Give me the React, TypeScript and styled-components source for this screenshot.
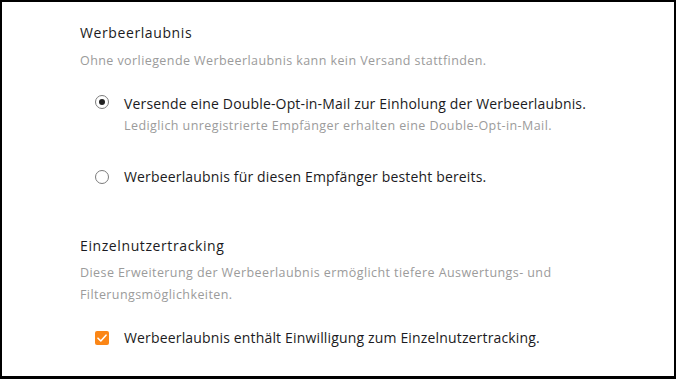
import React, { useState } from "react";
import styled, { createGlobalStyle } from "styled-components";

const Global = createGlobalStyle`
  html, body { margin: 0; padding: 0; background: #fff; }
  body { font-family: "Open Sans", "Noto Sans", sans-serif; }
  * { box-sizing: border-box; }
`;

const Frame = styled.div`
  width: 676px;
  height: 379px;
  border: 2px solid #000;
  border-bottom-width: 3px;
  padding: 21px 40px 0 78px;
  background: #fff;
`;

const Section = styled.section<{ $gap?: number }>`
  margin-top: ${(p) => p.$gap ?? 0}px;
`;

const Title = styled.h2`
  margin: 0;
  font-size: 14px;
  line-height: 20px;
  font-weight: 400;
  letter-spacing: 0.6px;
  color: #1b1b22;
`;

const Desc = styled.p<{ $mt?: number }>`
  margin: ${(p) => p.$mt ?? 8}px 0 0;
  max-width: 520px;
  font-size: 12.5px;
  line-height: 22px;
  letter-spacing: 0.42px;
  color: #9b9b9b;
`;

const Options = styled.div<{ $mt: number }>`
  margin-top: ${(p) => p.$mt}px;
  padding-left: 15px;
  display: flex;
  flex-direction: column;
`;

const Option = styled.label<{ $mt?: number }>`
  display: grid;
  grid-template-columns: 14px 1fr;
  column-gap: 15px;
  align-items: start;
  margin-top: ${(p) => p.$mt ?? 0}px;
  cursor: pointer;
`;

const Control = styled.span`
  height: 20px;
  display: flex;
  align-items: center;
`;

const Radio = styled.span<{ $on: boolean }>`
  width: 14px;
  height: 14px;
  border-radius: 50%;
  border: 1px solid #7b7b7b;
  display: flex;
  align-items: center;
  justify-content: center;
  &::after {
    content: "";
    width: 6px;
    height: 6px;
    border-radius: 50%;
    background: ${(p) => (p.$on ? "#222" : "transparent")};
  }
`;

const Check = styled.span<{ $on: boolean }>`
  width: 14px;
  height: 14px;
  border-radius: 2px;
  background: ${(p) => (p.$on ? "#fb8616" : "#fff")};
  border: ${(p) => (p.$on ? "none" : "1px solid #7b7b7b")};
  display: flex;
  align-items: center;
  justify-content: center;
`;

const LabelText = styled.span`
  font-size: 14px;
  line-height: 20px;
  letter-spacing: 0.16px;
  color: #1b1b22;
`;

const SubText = styled.span`
  display: block;
  margin-top: 2px;
  font-size: 12.5px;
  line-height: 20px;
  letter-spacing: 0.42px;
  color: #9b9b9b;
`;

export default function App() {
  const [mode, setMode] = useState<"doi" | "exists">("doi");
  const [track, setTrack] = useState(true);

  return (
    <>
      <Global />
      <Frame>
        <Section>
          <Title>Werbeerlaubnis</Title>
          <Desc $mt={7}>Ohne vorliegende Werbeerlaubnis kann kein Versand stattfinden.</Desc>
          <Options $mt={20}>
            <Option onClick={() => setMode("doi")}>
              <Control>
                <Radio $on={mode === "doi"} />
              </Control>
              <div>
                <LabelText>Versende eine Double-Opt-in-Mail zur Einholung der Werbeerlaubnis.</LabelText>
                <SubText>Lediglich unregistrierte Empfänger erhalten eine Double-Opt-in-Mail.</SubText>
              </div>
            </Option>
            <Option $mt={31} onClick={() => setMode("exists")}>
              <Control>
                <Radio $on={mode === "exists"} />
              </Control>
              <LabelText>Werbeerlaubnis für diesen Empfänger besteht bereits.</LabelText>
            </Option>
          </Options>
        </Section>
        <Section $gap={49}>
          <Title>Einzelnutzertracking</Title>
          <Desc $mt={6}>
            Diese Erweiterung der Werbeerlaubnis ermöglicht tiefere Auswertungs- und Filterungsmöglichkeiten.
          </Desc>
          <Options $mt={22}>
            <Option onClick={() => setTrack(!track)}>
              <Control>
                <Check $on={track}>
                  {track && (
                    <svg width="10" height="8" viewBox="0 0 10 8">
                      <path d="M1 4.2 L3.8 7 L9 1.2" fill="none" stroke="#fff" strokeWidth="1.6" strokeLinecap="round" strokeLinejoin="round" />
                    </svg>
                  )}
                </Check>
              </Control>
              <LabelText>Werbeerlaubnis enthält Einwilligung zum Einzelnutzertracking.</LabelText>
            </Option>
          </Options>
        </Section>
      </Frame>
    </>
  );
}
